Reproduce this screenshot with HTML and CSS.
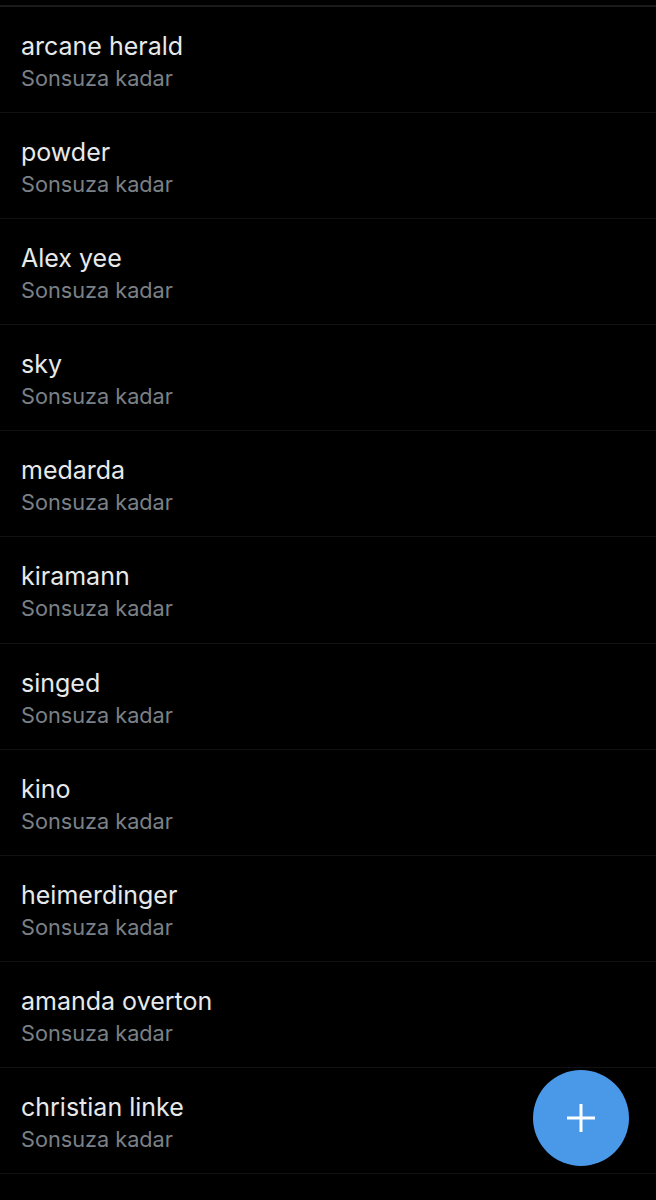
FILE: index.html
```html
<!DOCTYPE html>
<html>
<head>
    <title>Sessize alınan kelimeler</title>
    <link rel="stylesheet" href="styles.css">
</head>
<body>
    <ul class="word-list">
        <li class="word-row"><span class="word">arcane herald</span><span class="duration">Sonsuza kadar</span></li>
        <li class="word-row"><span class="word">powder</span><span class="duration">Sonsuza kadar</span></li>
        <li class="word-row"><span class="word">Alex yee</span><span class="duration">Sonsuza kadar</span></li>
        <li class="word-row"><span class="word">sky</span><span class="duration">Sonsuza kadar</span></li>
        <li class="word-row"><span class="word">medarda</span><span class="duration">Sonsuza kadar</span></li>
        <li class="word-row"><span class="word">kiramann</span><span class="duration">Sonsuza kadar</span></li>
        <li class="word-row"><span class="word">singed</span><span class="duration">Sonsuza kadar</span></li>
        <li class="word-row"><span class="word">kino</span><span class="duration">Sonsuza kadar</span></li>
        <li class="word-row"><span class="word">heimerdinger</span><span class="duration">Sonsuza kadar</span></li>
        <li class="word-row"><span class="word">amanda overton</span><span class="duration">Sonsuza kadar</span></li>
        <li class="word-row"><span class="word">christian linke</span><span class="duration">Sonsuza kadar</span></li>
    </ul>

    <button class="fab" aria-label="Ekle">
        <svg width="30" height="30" viewBox="0 0 30 30">
            <path d="M15 1v28M1 15h28" stroke="#fff" stroke-width="3" fill="none"/>
        </svg>
    </button>
</body>
</html>
```

FILE: styles.css
```css
body {
    margin: 0;
    height: 1200px;
    overflow: hidden;
    position: relative;
    background-color: #000;
    font-family: Inter, "Noto Sans", sans-serif;
}

.word-list {
    list-style: none;
    margin: 5px 0 0;
    padding: 0;
    border-top: 2px solid #181a1c;
}

.word-row {
    box-sizing: border-box;
    height: 106.1px;
    padding: 23px 21px 0;
    border-bottom: 1px solid #101214;
}

.word,
.duration {
    display: block;
}

.word {
    color: #e7e9ea;
    font-size: 25px;
    line-height: 32px;
}

.duration {
    color: #7b8086;
    font-size: 21.7px;
    line-height: 32px;
}

/* Boton flotante */
.fab {
    position: absolute;
    left: 533px;
    top: 1070px;
    width: 96px;
    height: 96px;
    padding: 0;
    border: none;
    border-radius: 50%;
    background-color: #4a99e9;
    display: flex;
    align-items: center;
    justify-content: center;
}
```
